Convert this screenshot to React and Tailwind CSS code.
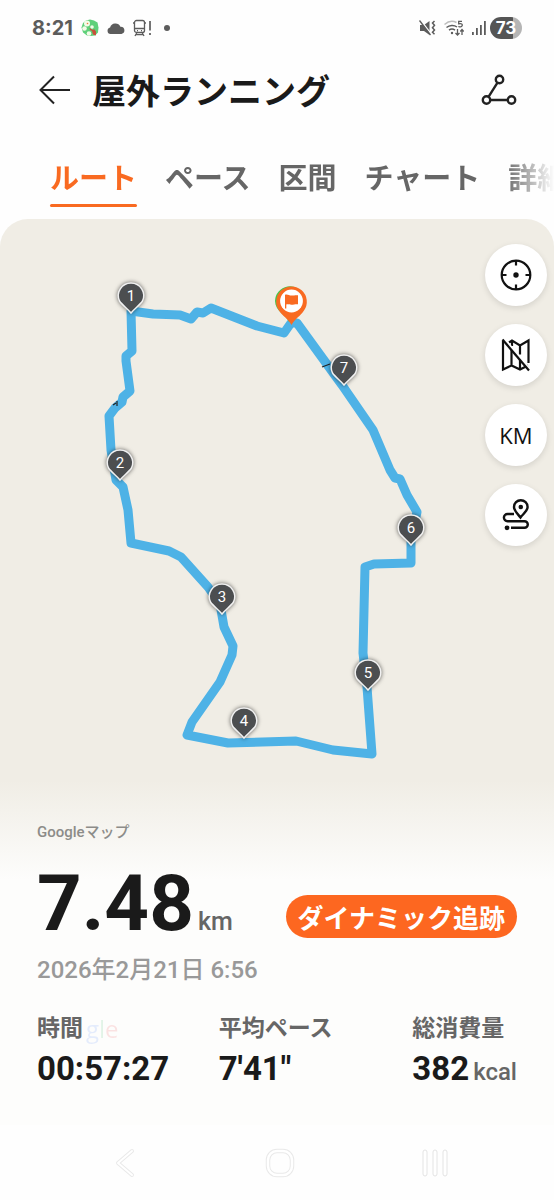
import React, { useState } from "react";

const tabs = ["ルート", "ペース", "区間", "チャート", "詳細"];

const route = [
  [291, 323], [284, 333], [257, 326], [211, 308], [203, 313], [197, 312],
  [191, 319], [180, 315], [153, 314], [131, 311], [132, 351], [126, 356],
  [126, 361], [130, 391], [123, 397], [122, 402], [115, 408], [109, 416],
  [111, 450], [116, 480], [123, 487], [128, 510], [131, 543], [169, 551],
  [181, 557], [208, 587], [220, 604], [224, 627], [233, 646], [232, 655],
  [220, 682], [192, 722], [187, 735], [228, 743], [296, 741], [333, 750],
  [372, 754], [367, 687], [363, 653], [365, 567], [374, 564], [411, 563],
  [411, 540], [417, 512], [407, 495], [400, 479], [395, 478], [390, 470],
  [373, 430], [342, 385], [297, 323],
];

const markers = [
  { km: 1, x: 131, y: 296 },
  { km: 2, x: 120, y: 463 },
  { km: 3, x: 222, y: 597 },
  { km: 4, x: 244, y: 721 },
  { km: 5, x: 368, y: 673 },
  { km: 6, x: 411, y: 528 },
  { km: 7, x: 344, y: 368 },
];

function StatusBar() {
  return (
    <div className="flex h-14 items-center justify-between pl-8 pr-8 text-[#5c5c5c]">
      <div className="flex items-center gap-2">
        <span className="font-['Inter'] text-[20px] leading-6 font-bold">8:21</span>
        <svg width="18" height="18" viewBox="0 0 18 18">
          <path d="M5 1.500 9 .5l4 1 3.500 2 1 5-.5 5-3 3-4 .5-4-.5-4-3-1.500-5L2 4z" fill="#5fd07a" />
          <circle cx="6" cy="4.500" r="3" fill="#f3fbe8" />
          <circle cx="3.500" cy="9.500" r="2.300" fill="#f3fbe8" />
          <circle cx="8" cy="14.500" r="2.300" fill="#f3fbe8" />
          <circle cx="11" cy="8" r="1.800" fill="#f3fbe8" />
          <path d="m8.500 9 3.500 2 1-1 2 2.500v4l-3-1-1-3.500-2-1z" fill="#c8503c" />
          <circle cx="6.500" cy="4.500" r=".8" fill="#f07840" />
        </svg>
        <svg width="18" height="11" viewBox="0 0 18 11" fill="currentColor">
          <path d="M3.500 11a3.300 3.300 0 0 1-.4-6.500A5.500 5.500 0 0 1 13.400 3.700 3.700 3.700 0 0 1 14.500 11z" />
        </svg>
        <svg width="19" height="18" viewBox="0 0 19 18" fill="none" stroke="currentColor" strokeWidth="1.300">
          <path d="M3.500 1.500h6a2 2 0 0 1 2 2v8a2 2 0 0 1-2 2h-6a2 2 0 0 1-2-2v-8a2 2 0 0 1 2-2zM1.500 9.500h10M1.500 4H0m11.500 0H13M4 11.700h1m3 0h1M4 13.500 2 17m7-3.500 2 3.500M3 15.700h7" />
          <path d="M17 2v9.500m0 2.500v2" strokeWidth="1.700" />
        </svg>
        <span className="ml-1 h-[6px] w-[6px] rounded-full bg-[#5c5c5c]" />
      </div>
      <div className="flex items-center gap-2">
        <svg width="17" height="16" viewBox="0 0 17 16" fill="currentColor">
          <path d="M1 5h4l5.500-4v14L5 11H1z" />
          <path d="m1.500 0 11 14.500" stroke="#fff" strokeWidth="1.500" />
          <path d="m.5.500 11 14.500" fill="none" stroke="currentColor" strokeWidth="1.300" />
          <path d="m15.500 1-2 2 2 2.300-2 2.400 2 2.300-2 2.300 2 2" fill="none" stroke="currentColor" strokeWidth="1.500" />
        </svg>
        <svg width="20" height="17" viewBox="0 0 20 17" fill="none" stroke="currentColor" strokeWidth="1.500">
          <path d="M.5 4.500c4-3.500 8.500-3.800 12-2" stroke="#bdbdbd" />
          <path d="M2.500 7.500c3-2.500 7.500-2.800 10.500-.5M5 10.200c2-1.500 4-1.500 6 0" />
          <path d="M18 1.300h-3.300v2.500c3-.7 4 .4 3.400 2-.5 1.300-2.500 1.500-3.600.4M13.500 9v6m-2-2 2 2 2-2M18 15V9.500m-1.700 2L18 9.500l1.700 2" strokeWidth="1.300" />
          <circle cx="8" cy="13" r="1.200" fill="currentColor" stroke="none" />
        </svg>
        <svg width="14" height="16" viewBox="0 0 14 16" fill="currentColor">
          <path d="M0 12h1.800v3H0zM4 8h1.800v7H4zM8 5h1.800v10H8zM12 1h1.800v14H12z" />
        </svg>
        <span className="-ml-1 flex h-[22px] w-8 items-center justify-center rounded-full bg-linear-to-r from-[#555] from-73% to-[#b5b5b5] to-73% font-['Inter'] text-[17px] leading-5 font-bold text-white">
          73
        </span>
      </div>
    </div>
  );
}

function Header() {
  return (
    <header className="flex h-[68px] items-center pr-[37px] pl-[39px]">
      <button aria-label="戻る">
        <svg width="32" height="30" viewBox="0 0 32 30" fill="none" stroke="#222" strokeWidth="2">
          <path d="M31 15H2M15 1.500 1.500 15 15 28.500" />
        </svg>
      </button>
      <h1 className="ml-[21px] flex-1 pt-1 text-[34px] leading-[40px] font-bold text-[#1a1a1a]">屋外ランニング</h1>
      <button aria-label="共有">
        <svg width="36" height="32" viewBox="0 0 36 32" fill="none" stroke="#222" strokeWidth="2.400">
          <circle cx="18.500" cy="5.500" r="3.700" />
          <circle cx="5.500" cy="26" r="3.700" />
          <circle cx="30.500" cy="26" r="3.700" />
          <path d="M16.500 8.700 7.500 22.900M9.200 26h17.600" />
        </svg>
      </button>
    </header>
  );
}

function Pin({ km, x, y }) {
  return (
    <g transform={`translate(${x} ${y})`}>
      <path
        d="M0 17C-3 13-9 9-11.500 5A12.700 12.700 0 1 1 11.500 5C9 9 3 13 0 17z"
        fill="#4c4e50"
        stroke="#f1f1f1"
        strokeWidth="1.500"
        className="drop-shadow-[0_0_2px_rgba(0,0,0,0.6)]"
      />
      <text y="5" textAnchor="middle" fill="#fff" className="text-[15px]">
        {km}
      </text>
    </g>
  );
}

function RouteMap() {
  return (
    <svg viewBox="0 219 554 561" className="block w-full">
      <polygon
        points={route.map((p) => p.join(",")).join(" ")}
        fill="none"
        stroke="#4eb2e6"
        strokeWidth="9"
        strokeLinejoin="round"
      />
      <path d="m322 367 8-3M113 405l3-2m1-2v5" stroke="#222" strokeWidth="1.200" />
      {markers.map((m) => (
        <Pin key={m.km} {...m} />
      ))}
      <path d="M289 322c-2-6-14-11-14-21a15 15 0 0 1 29-5z" fill="#45c44c" />
      <path d="M291.500 325c-3-6-9-9-12.500-14.500a15.300 15.300 0 1 1 25 0c-3.500 5.500-9.500 8.500-12.500 14.500z" fill="#f96a21" />
      <circle cx="291.500" cy="301" r="11.400" fill="#fff" />
      <path d="M285 294.800c2.500-1 4 .8 6.500.8s4-.8 6.500-.3v9c-2.500-.4-4 .4-6.500.4s-3-.7-5.200-.3v4H285z" fill="#f96a21" />
    </svg>
  );
}

function MapButton({ label, children }) {
  return (
    <button
      aria-label={label}
      className="flex h-[62px] w-[62px] items-center justify-center rounded-full bg-white text-[#111] shadow-[0_2px_6px_rgba(0,0,0,0.12)]"
    >
      {children}
    </button>
  );
}

function MapButtons() {
  return (
    <div className="absolute top-[25px] right-[7px] flex flex-col gap-[18px]">
      <MapButton label="現在地">
        <svg width="32" height="32" viewBox="0 0 32 32" fill="none" stroke="currentColor" strokeWidth="2.200">
          <circle cx="16" cy="16" r="14.300" />
          <path d="M16 2v4.500M16 25.500V30M2 16h4.500M25.500 16H30" />
          <circle cx="16" cy="16" r="2.700" fill="currentColor" stroke="none" />
        </svg>
      </MapButton>
      <MapButton label="地図を非表示">
        <svg width="30" height="34" viewBox="0 0 30 34" fill="none" stroke="currentColor" strokeWidth="2.200">
          <path d="M2 3v28.500l8.500-4 8.500 4 8-4M8 4.500l3-2 8 5 8.500-5v22.500M10.500 12v15.500M11 3v5M19 7.500v9M19 21v10.500" />
          <path d="m4 1.500 25 30" stroke="#fff" strokeWidth="2" />
          <path d="m1.500 1.500 26.500 31" />
        </svg>
      </MapButton>
      <MapButton label="距離の表示">
        <span className="font-['Open_Sans'] text-[22px] leading-6">KM</span>
      </MapButton>
      <MapButton label="ルートの再生">
        <svg width="28" height="32" viewBox="0 0 28 32" fill="none" stroke="currentColor" strokeWidth="2.400">
          <path d="M18.500 18.500c-2.500-3.500-6.500-6.500-6.500-10.500a6.800 6.800 0 0 1 13.600 0c0 4-4.600 7-7.100 10.500z" />
          <circle cx="18.800" cy="8" r="2.300" fill="currentColor" stroke="none" />
          <path d="M12 15H5.500a3.600 3.600 0 0 0 0 7.200h17a3.300 3.300 0 0 1 0 6.600H9" />
          <circle cx="5" cy="28.800" r="2.400" fill="currentColor" stroke="none" />
        </svg>
      </MapButton>
    </div>
  );
}

function Watermark() {
  return (
    <span aria-hidden="true" className="ml-[3px] font-['Open_Sans'] text-[24px] leading-6 font-medium opacity-10">
      <span className="text-blue-600">g</span>
      <span className="text-green-600">l</span>
      <span className="text-red-600">e</span>
    </span>
  );
}

function Stat({ label, value, unit, children }) {
  return (
    <div className="whitespace-nowrap">
      <dt className="flex items-center text-[23px] leading-6 font-bold text-[#666]">
        {label}
        {children}
      </dt>
      <dd className="mt-2 text-[33px] leading-[40px] font-bold text-[#1a1a1a]">
        {value}
        {unit && <span className="ml-1 text-[24px] leading-6 font-medium text-[#666]">{unit}</span>}
      </dd>
    </div>
  );
}

function Summary() {
  return (
    <section className="bg-linear-to-b from-[#f0ede5] to-[#fdfdfc] to-[100px] px-[37px] pt-[42px] pb-9">
      <p className="text-[15px] leading-5 font-medium text-[#8c8c89]">Googleマップ</p>
      <div className="mt-[22px] flex items-end justify-between">
        <p className="flex items-baseline text-[78px] leading-[80px] font-bold text-[#1a1a1a]">
          7.48<span className="ml-1 text-[25px] leading-6 font-medium text-[#666]">km</span>
        </p>
        <button className="mb-[6px] h-[43px] rounded-full bg-[#fd6720] px-3 pt-1 text-[26px] leading-8 font-bold whitespace-nowrap text-white">
          ダイナミック追跡
        </button>
      </div>
      <p className="mt-[14px] text-[24px] leading-6 font-medium text-[#999]">2026年2月21日 6:56</p>
      <dl className="mt-[35px] grid grid-cols-[182fr_194fr_104fr]">
        <Stat label="時間" value="00:57:27">
          <Watermark />
        </Stat>
        <Stat label="平均ペース" value={"7'41\""} />
        <Stat label="総消費量" value="382" unit="kcal" />
      </dl>
    </section>
  );
}

function NavBar() {
  return (
    <nav className="flex h-[75px] items-center justify-between pr-[104px] pl-[110px]">
      <button aria-label="戻る">
        <svg width="30" height="30" viewBox="0 0 30 30" fill="none" strokeLinecap="round" strokeLinejoin="round">
          <path d="M22 3 8 15l14 12" stroke="#e9e9e9" strokeWidth="4" />
          <path d="M22 3 8 15l14 12" stroke="#fff" strokeWidth="2" />
        </svg>
      </button>
      <button aria-label="ホーム">
        <svg width="30" height="30" viewBox="0 0 30 30" fill="none">
          <rect x="3" y="3" width="24" height="24" rx="9" stroke="#e9e9e9" strokeWidth="4.500" />
          <rect x="3" y="3" width="24" height="24" rx="9" stroke="#fff" strokeWidth="2.500" />
        </svg>
      </button>
      <button aria-label="履歴">
        <svg width="30" height="30" viewBox="0 0 30 30" fill="#fff" stroke="#e4e4e4">
          <rect x="3" y="2" width="4" height="26" rx="2" />
          <rect x="13" y="2" width="4" height="26" rx="2" />
          <rect x="23" y="2" width="4" height="26" rx="2" />
        </svg>
      </button>
    </nav>
  );
}

function App() {
  const [active, setActive] = useState(tabs[0]);

  return (
    <div lang="ja" className="min-h-screen w-full bg-[#fefefe] font-['Roboto','Noto_Sans_CJK_JP',sans-serif]">
      <StatusBar />
      <Header />
      <div className="flex gap-7 overflow-hidden mask-r-from-91% mask-r-to-100% pt-[39px] pb-3 pl-[50px]">
        {tabs.map((tab) => (
          <button
            key={tab}
            onClick={() => setActive(tab)}
            className={`relative shrink-0 pb-3 text-[29px] leading-8 font-bold whitespace-nowrap ${
              tab === active ? "text-[#f96a21]" : "text-[#666]"
            }`}
          >
            {tab}
            {tab === active && <span className="absolute bottom-0 left-0 h-[3px] w-full rounded-full bg-[#f96a21]" />}
          </button>
        ))}
      </div>
      <main>
        <div className="relative rounded-t-[28px] bg-[#f0ede5]">
          <RouteMap />
          <MapButtons />
        </div>
        <Summary />
      </main>
      <NavBar />
    </div>
  );
}

export default App;
